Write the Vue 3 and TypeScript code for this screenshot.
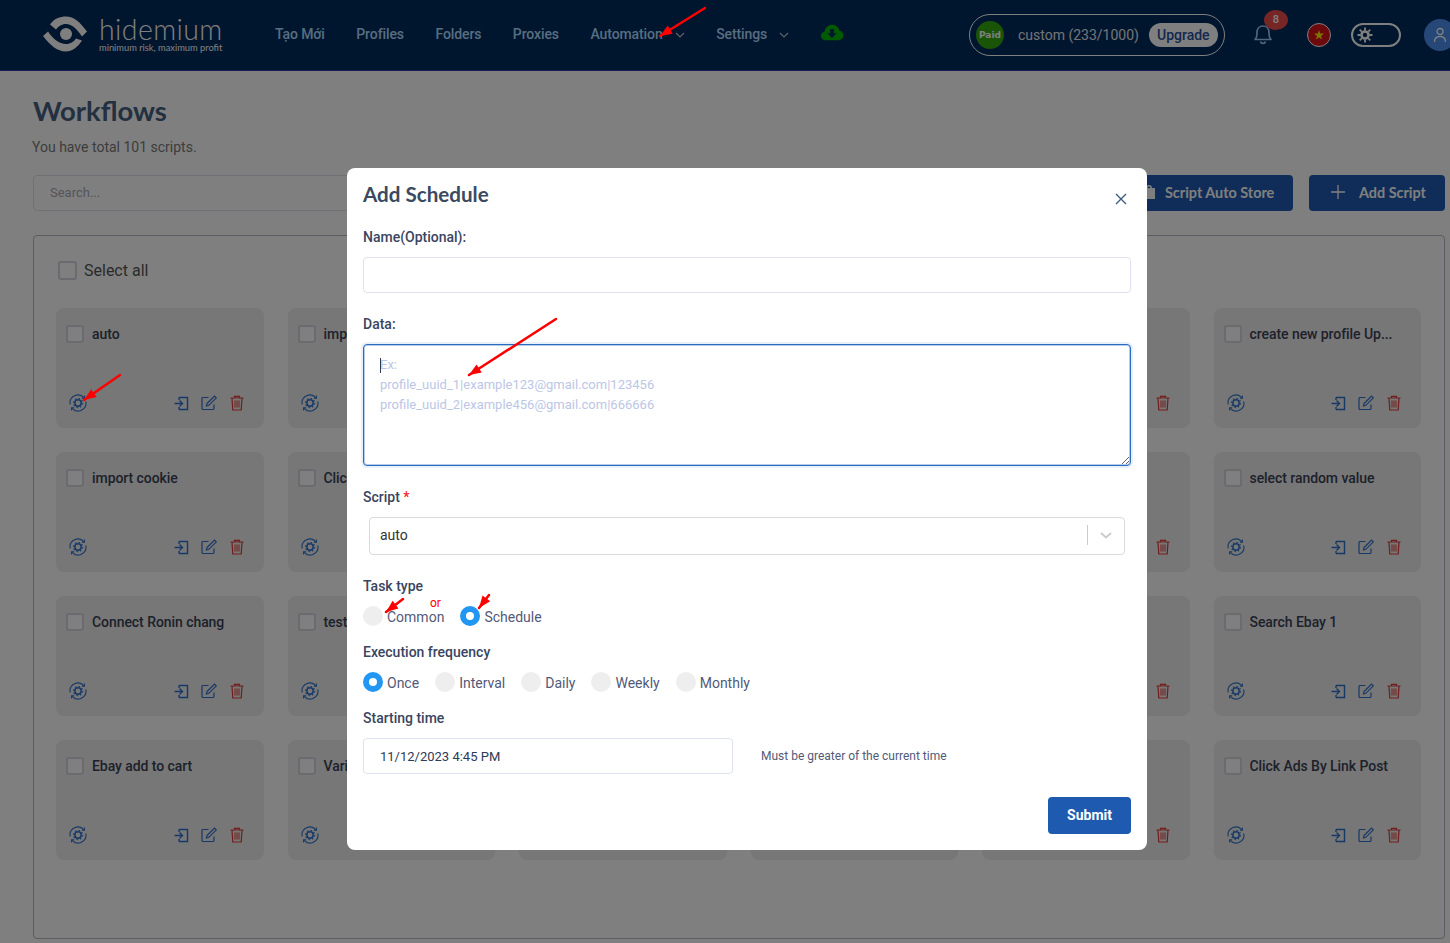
<script setup lang="ts">
const navItems = [
  { label: 'Tạo Mới', arrow: false },
  { label: 'Profiles', arrow: false },
  { label: 'Folders', arrow: false },
  { label: 'Proxies', arrow: false },
  { label: 'Automation', arrow: true },
  { label: 'Settings', arrow: true },
];

const scripts = [
  'auto', 'import cookie', '', '', '', 'create new profile Up...',
  'import cookie', 'Click Ads', '', '', '', 'select random value',
  'Connect Ronin chang', 'test', '', '', '', 'Search Ebay 1',
  'Ebay add to cart', 'Various', '', '', '', 'Click Ads By Link Post',
];

const frequencies = [
  { label: 'Once', on: true },
  { label: 'Interval', on: false },
  { label: 'Daily', on: false },
  { label: 'Weekly', on: false },
  { label: 'Monthly', on: false },
];

const taskTypes = [
  { label: 'Common', on: false },
  { label: 'Schedule', on: true },
];

const arrows = [
  { x1: 705, y1: 8, x2: 660, y2: 36 },
  { x1: 120, y1: 375, x2: 84, y2: 400 },
  { x1: 556, y1: 319, x2: 469, y2: 375 },
  { x1: 403, y1: 599, x2: 386, y2: 612 },
  { x1: 489, y1: 595, x2: 479, y2: 608 },
];

function arrowHead(a: { x1: number; y1: number; x2: number; y2: number }) {
  const ang = Math.atan2(a.y2 - a.y1, a.x2 - a.x1);
  const len = 13;
  const spread = 0.38;
  const p1 = [a.x2 - len * Math.cos(ang - spread), a.y2 - len * Math.sin(ang - spread)];
  const p2 = [a.x2 - len * Math.cos(ang + spread), a.y2 - len * Math.sin(ang + spread)];
  return `${a.x2},${a.y2} ${p1[0]},${p1[1]} ${p2[0]},${p2[1]}`;
}

const placeholder = 'Ex:\nprofile_uuid_1|example123@gmail.com|123456\nprofile_uuid_2|example456@gmail.com|666666';
</script>

<template>
  <div class="app">
    <header class="topbar">
      <div class="logo">
        <svg class="logo-mark" width="50" height="40" viewBox="0 0 50 40" fill="none">
          <path d="M9 10.5C13 4.5 19 2.5 25 2.5C33 2.5 39 8 46 17.5L41 22.5C36 15 31 10 25 10C20.5 10 17 12.5 15 15.5Z" fill="#fff" />
          <path d="M41 26.5C37 33 31 37.5 25 37.5C16 37.5 9 31 2 22L7 17.5C12 25 18 30 25 30C29.5 30 33 27.5 35 24.5Z" fill="#fff" />
          <circle cx="25" cy="20" r="6" fill="#fff" />
        </svg>
        <div class="logo-text">
          <span class="logo-name">hidemium</span>
          <span class="logo-sub">minimum risk, maximum profit</span>
        </div>
      </div>

      <nav class="nav">
        <a v-for="item in navItems" :key="item.label" class="nav-item">
          {{ item.label }}
          <svg v-if="item.arrow" width="10" height="6" viewBox="0 0 10 6" fill="none" stroke="#b8c2cc" stroke-width="1.2">
            <path d="M1 1l4 4 4-4" />
          </svg>
        </a>
        <svg class="cloud" width="24" height="17" viewBox="0 0 26 20" preserveAspectRatio="none">
          <path d="M7 19C3 19 1 16.5 1 14C1 11.5 2.5 9.5 5 9C5.5 4.5 9 1 13 1C17 1 20 3.5 21 8C24 8.5 25.5 11 25.5 13.5C25.5 16.5 23 19 20 19Z" fill="#00b400" />
          <path d="M11 6h4v5h3l-5 5.5-5-5.5h3z" fill="#002a5c" />
        </svg>
      </nav>

      <div class="plan">
        <span class="paid">Paid</span>
        <span class="plan-name">custom (233/1000)</span>
        <span class="upgrade">Upgrade</span>
      </div>

      <div class="bell">
        <svg width="20" height="22" viewBox="0 0 20 22" fill="none" stroke="#9ccaf5" stroke-width="1.7">
          <path d="M2 16.5C4 15 4 12.5 4 9.5C4 5.5 6.5 3 10 3C13.5 3 16 5.5 16 9.5C16 12.5 16 15 18 16.5Z" stroke-linejoin="round" />
          <path d="M7.5 18.5C8 21 12 21 12.5 18.5" />
        </svg>
        <span class="badge">8</span>
      </div>

      <span class="flag">
        <svg width="10" height="10" viewBox="0 0 10 10"><polygon points="5,0 6.2,3.5 10,3.6 7,5.9 8.1,9.6 5,7.4 1.9,9.6 3,5.9 0,3.6 3.8,3.5" fill="#ffe600" /></svg>
      </span>

      <span class="theme-toggle">
        <svg width="16" height="16" viewBox="0 0 16 16" fill="none" stroke="#fff">
          <circle cx="8" cy="8" r="3.5" stroke-width="2.6" />
          <path d="M8 0.5v3M8 12.5v3M0.5 8h3M12.5 8h3M2.7 2.7l2 2M11.3 11.3l2 2M2.7 13.3l2-2M11.3 4.7l2-2" stroke-width="1.8" />
        </svg>
      </span>

      <span class="avatar">
        <svg width="14" height="16" viewBox="0 0 14 16" fill="none" stroke="#fff" stroke-width="1.3">
          <circle cx="7" cy="4.5" r="3" />
          <path d="M1.5 15C1.5 11 4 9.5 7 9.5C10 9.5 12.5 11 12.5 15" />
        </svg>
      </span>
    </header>

    <main class="page">
      <h1 class="title">Workflows</h1>
      <p class="subtitle">You have total 101 scripts.</p>

      <div class="toolbar">
        <div class="search">Search...</div>
        <button class="btn btn-store">
          <svg width="14" height="16" viewBox="0 0 14 16" fill="#fff"><path d="M1 4h12v11H1zM4 4a3 3 0 0 1 6 0H8.5a1.5 1.5 0 0 0-3 0z" /></svg>
          Script Auto Store
        </button>
        <button class="btn btn-add">
          <svg width="16" height="16" viewBox="0 0 16 16" stroke="#fff" stroke-width="1.3"><path d="M8 1v14M1 8h14" /></svg>
          Add Script
        </button>
      </div>

      <section class="panel">
        <label class="select-all"><span class="check check-lg"></span>Select all</label>
        <div class="grid">
          <div v-for="(name, i) in scripts" :key="i" class="card">
            <div class="card-head">
              <span class="check"></span>
              <span class="card-name">{{ name }}</span>
            </div>
            <div class="card-actions">
              <svg width="18" height="18" viewBox="0 0 18 18" fill="none" stroke="#2f72cf" stroke-width="1.1">
                <path d="M1.2 10.5A7.9 7.9 0 0 1 15 3.9" />
                <path d="M16.8 7.5A7.9 7.9 0 0 1 3 14.1" />
                <path d="M15.4 1.6v2.6h-2.6M2.6 16.4v-2.6h2.6" />
                <circle cx="9" cy="9" r="3.2" stroke-width="1.5" />
                <circle cx="9" cy="9" r="4.6" stroke-width="1.1" stroke-dasharray="1.4 2.2" />
              </svg>
              <span class="spacer"></span>
              <svg width="15" height="15" viewBox="0 0 15 15" fill="none" stroke="#2f72cf" stroke-width="1.4">
                <path d="M5 1.5h8.5v12H5M5 1.5V4M5 13.5V11" />
                <path d="M0.5 7.5H8M5.5 4.5l3 3-3 3" />
              </svg>
              <svg width="16" height="16" viewBox="0 0 16 16" fill="none" stroke="#2f72cf" stroke-width="1.2">
                <path d="M13 9.5v4a1 1 0 0 1-1 1H2a1 1 0 0 1-1-1v-10a1 1 0 0 1 1-1h5.5" />
                <path d="M6 8.5L13.5 1l1.8 1.8L7.8 10.3 5.5 11z" />
              </svg>
              <svg class="ic-trash" width="14" height="16" viewBox="0 0 14 16" fill="none" stroke="#e23a3a" stroke-width="1.2">
                <path d="M0.5 3h13M4.5 3V1.3h5V3M2 3l.8 12h8.4L12 3" />
                <path d="M5 5.5v7M7 5.5v7M9 5.5v7" stroke-width="1" />
              </svg>
            </div>
          </div>
        </div>
      </section>
    </main>

    <div class="overlay">
      <div class="modal">
        <div class="modal-head">
          <h2 class="modal-title">Add Schedule</h2>
          <svg class="close" width="12" height="12" viewBox="0 0 12 12" stroke="#3d5a80" stroke-width="1.4"><path d="M1 1l10 10M11 1L1 11" /></svg>
        </div>

        <label class="label">Name(Optional):</label>
        <div class="input"></div>

        <label class="label label-data">Data:</label>
        <div class="textarea-wrap">
          <textarea class="textarea" :placeholder="placeholder"></textarea>
          <span class="caret"></span>
        </div>

        <label class="label label-script">Script <em>*</em></label>
        <div class="select">
          <span>auto</span>
          <span class="select-sep"></span>
          <svg width="12" height="7" viewBox="0 0 12 7" fill="none" stroke="#ccc" stroke-width="2"><path d="M1 1l5 4.5L11 1" /></svg>
        </div>

        <label class="label label-task">Task type</label>
        <div class="radios">
          <span v-for="r in taskTypes" :key="r.label" class="radio-item">
            <span class="radio" :class="{ on: r.on }"></span>{{ r.label }}
          </span>
        </div>

        <label class="label label-freq">Execution frequency</label>
        <div class="radios">
          <span v-for="r in frequencies" :key="r.label" class="radio-item">
            <span class="radio" :class="{ on: r.on }"></span>{{ r.label }}
          </span>
        </div>

        <label class="label label-time">Starting time</label>
        <div class="time-row">
          <div class="input input-time">11/12/2023 4:45 PM</div>
          <span class="hint">Must be greater of the current time</span>
        </div>

        <div class="modal-foot">
          <button class="submit">Submit</button>
        </div>
      </div>
    </div>

    <!-- red annotations drawn over the screenshot -->
    <span class="or">or</span>
    <svg class="marks" width="1450" height="943" viewBox="0 0 1450 943">
      <g v-for="(a, i) in arrows" :key="i">
        <line :x1="a.x1" :y1="a.y1" :x2="a.x2" :y2="a.y2" stroke="#f00" stroke-width="2.5" stroke-linecap="round" />
        <polygon :points="arrowHead(a)" fill="#f00" />
      </g>
    </svg>
  </div>
</template>

<style>
html,
body {
  margin: 0;
  background: #fff;
}
</style>

<style scoped>
.app {
  position: relative;
  width: 1450px;
  height: 943px;
  overflow: hidden;
  background: #fff;
  font-family: Roboto, "Liberation Sans", sans-serif;
  font-size: 14px;
  color: #2f3a56;
}

.topbar {
  display: flex;
  align-items: center;
  height: 70px;
  padding-left: 41px;
  background: #002a5c;
  border-bottom: 1px solid #3a3ab0;
  white-space: nowrap;
}

.logo {
  display: flex;
  flex: none;
  align-items: center;
  gap: 8px;
  width: 234px;
  margin-top: -3px;
}

.logo-text {
  display: flex;
  flex-direction: column;
  color: #fff;
}

.logo-name {
  font-family: Lato, sans-serif;
  font-size: 28.5px;
  font-weight: 300;
  line-height: 28px;
  letter-spacing: 0.4px;
}

.logo-sub {
  font-family: Lato, sans-serif;
  font-size: 9.3px;
  line-height: 9px;
}

.nav {
  display: flex;
  flex: none;
  align-items: center;
  gap: 31.5px;
  width: 694px;
  margin-top: -3px;
}

.nav-item {
  display: flex;
  align-items: center;
  gap: 12px;
  color: #aedcff;
  font-weight: 500;
  letter-spacing: -0.1px;
}

.nav-item svg {
  margin-top: 3px;
}

.cloud {
  margin-left: -1px;
  margin-top: -3px;
}

.plan {
  display: flex;
  align-items: center;
  flex: none;
  width: 256px;
  height: 42px;
  box-sizing: border-box;
  margin-top: -1px;
  border: 1px solid #fff;
  border-radius: 21px;
  padding: 0 6px;
  color: #fff;
}

.paid {
  display: flex;
  align-items: center;
  justify-content: center;
  width: 28px;
  height: 28px;
  border-radius: 50%;
  background: #34a80f;
  color: #fff;
  font-family: "DejaVu Sans", sans-serif;
  font-weight: 700;
  font-size: 9px;
}

.plan-name {
  margin-left: 14px;
  color: #e4e8f0;
}

.upgrade {
  margin-left: 10px;
  padding: 0 8px;
  height: 24px;
  line-height: 24px;
  border-radius: 12px;
  background: #fff;
  color: #2a4fa0;
  font-weight: 500;
}

.bell {
  position: relative;
  flex: none;
  margin-left: 28px;
  width: 20px;
  height: 22px;
  margin-top: -2px;
}

.badge {
  position: absolute;
  top: -13px;
  left: 1px;
  margin-left: 10px;
  width: 24px;
  height: 20px;
  border-radius: 50%;
  background: #ef4c4c;
  color: #fff;
  font-size: 11px;
  font-weight: 500;
  line-height: 20px;
  text-align: center;
}

.flag {
  display: flex;
  align-items: center;
  justify-content: center;
  flex: none;
  width: 24px;
  height: 24px;
  margin-left: 34px;
  margin-top: -1px;
  border-radius: 50%;
  background: #d8131b;
  border: 1px solid #fff;
  box-sizing: border-box;
}

.theme-toggle {
  display: flex;
  align-items: center;
  flex: none;
  width: 50px;
  height: 24px;
  margin-left: 20px;
  margin-top: -1px;
  padding-left: 4px;
  box-sizing: border-box;
  border: 2px solid #fff;
  border-radius: 12px;
}

.avatar {
  display: flex;
  align-items: center;
  justify-content: center;
  flex: none;
  width: 32px;
  height: 32px;
  margin-left: 23px;
  border-radius: 50%;
  background: #4a90f0;
}

.page {
  padding: 23px 5px 0 33px;
}

.title {
  margin: 0;
  font-family: Lato, sans-serif;
  font-size: 27.4px;
  font-weight: 700;
  line-height: 34px;
  color: #46607e;
}

.subtitle {
  margin: 9px 0 0 -1px;
  line-height: 20px;
  color: #7a7a7a;
}

.toolbar {
  display: flex;
  align-items: center;
  gap: 16px;
  margin-top: 18px;
}

.search {
  flex: 1;
  height: 36px;
  box-sizing: border-box;
  padding-left: 16px;
  border: 1px solid #e2e2ea;
  border-radius: 4px;
  background: #fff;
  color: #a9a9b5;
  font-size: 13px;
  line-height: 33px;
}

.btn {
  display: flex;
  align-items: center;
  height: 36px;
  border: 0;
  border-radius: 4px;
  background: #1e5bb0;
  color: #fff;
  font-family: Lato, sans-serif;
  font-size: 14.4px;
  font-weight: 700;
  white-space: nowrap;
}

.btn-store {
  gap: 9px;
  width: 160px;
  padding: 0 10px 2px 9px;
}

.btn-add {
  gap: 13px;
  width: 136px;
  padding: 0 10px 2px 21px;
}

.panel {
  box-sizing: border-box;
  height: 704px;
  margin-top: 24px;
  padding: 23px 23px 0 22px;
  border: 1px solid #b8b8c4;
  border-radius: 4px;
}

.select-all {
  display: flex;
  align-items: center;
  gap: 7px;
  height: 22px;
  font-size: 16px;
  color: #555;
}

.check {
  flex: none;
  width: 14px;
  height: 14px;
  border: 2px solid #d4d4de;
  border-radius: 3px;
  background: #fff;
}

.check-lg {
  margin-left: 2px;
  width: 15px;
  height: 15px;
}

.grid {
  display: grid;
  grid-template-columns: repeat(6, 1fr);
  gap: 24px;
  margin-top: 27px;
}

.card {
  display: flex;
  flex-direction: column;
  justify-content: space-between;
  height: 120px;
  box-sizing: border-box;
  padding: 16px 20px 16px 10px;
  border-radius: 8px;
  background: #eeeeee;
}

.card-head {
  display: flex;
  align-items: center;
  gap: 8px;
  height: 20px;
  font-weight: 500;
  color: #3b4256;
  letter-spacing: -0.06px;
  white-space: nowrap;
  overflow: hidden;
}

.card-actions {
  display: flex;
  align-items: center;
  gap: 12px;
  height: 18px;
  padding-left: 3px;
}

.ic-trash {
  margin-left: 1px;
}

.spacer {
  flex: 1;
}

.overlay {
  position: absolute;
  inset: 0;
  padding-top: 168px;
  background: rgba(0, 0, 0, 0.5);
}

.modal {
  box-sizing: border-box;
  width: 800px;
  height: 682px;
  margin-left: 347px;
  padding: 16px;
  border-radius: 8px;
  background: #fff;
}

.modal-head {
  display: flex;
  align-items: flex-start;
  justify-content: space-between;
  height: 44px;
}

.modal-title {
  margin: 0;
  font-family: Lato, sans-serif;
  font-size: 20.6px;
  font-weight: 700;
  line-height: 21px;
  color: #3a4a60;
}

.close {
  margin: 9px 4px 0 0;
}

.label {
  display: block;
  font-weight: 500;
  line-height: 18px;
  color: #3a4560;
}

.label em {
  color: #f5222d;
  font-style: normal;
}

.input {
  box-sizing: border-box;
  height: 36px;
  margin-top: 11px;
  border: 1px solid #dfe2ee;
  border-radius: 4px;
}

.label-data {
  margin-top: 22px;
}

.textarea-wrap {
  position: relative;
  margin-top: 11px;
}

.textarea {
  display: block;
  box-sizing: border-box;
  width: 768px;
  height: 122px;
  margin: 0;
  padding: 10px 16px;
  border: 1px solid #2a6cc0;
  border-radius: 4px;
  outline: none;
  box-shadow: 0 0 0 2px #e8f0fa, inset 0 0 0 1px rgba(42, 108, 192, 0.35);
  font-family: Roboto, sans-serif;
  font-size: 13px;
  line-height: 20px;
  color: #2f3a56;
}

.textarea::placeholder {
  color: #bcc6e6;
  opacity: 1;
}

.caret {
  position: absolute;
  left: 17px;
  top: 14px;
  width: 1px;
  height: 15px;
  background: #2f3a56;
}

.label-script {
  margin-top: 22px;
}

.select {
  display: flex;
  align-items: center;
  box-sizing: border-box;
  width: 756px;
  height: 38px;
  margin: 11px 0 0 6px;
  padding: 0 12px 2px 10px;
  border: 1px solid #d9d9d9;
  border-radius: 4px;
  color: #333;
}

.select > span:first-child {
  flex: 1;
}

.select-sep {
  width: 1px;
  height: 20px;
  margin-right: 12px;
  background: #ccc;
}

.label-task {
  margin-top: 22px;
}

.radios {
  display: flex;
  align-items: center;
  gap: 16px;
  height: 20px;
  margin-top: 12px;
  color: #525a78;
}

.radio-item {
  display: flex;
  align-items: center;
  gap: 4px;
  line-height: 20px;
}

.radio {
  box-sizing: border-box;
  width: 20px;
  height: 20px;
  margin-bottom: 2px;
  border-radius: 50%;
  background: #eee;
}

.radio.on {
  border: 6px solid #2196f3;
  background: #fff;
}

.label-freq {
  margin-top: 16px;
}

.label-time {
  margin-top: 16px;
}

.time-row {
  display: flex;
  align-items: center;
  gap: 28px;
  margin-top: 11px;
}

.input-time {
  width: 370px;
  margin-top: 0;
  padding-left: 16px;
  line-height: 36px;
  font-size: 13px;
  color: #2f3a56;
}

.hint {
  font-size: 12px;
  color: #525a78;
}

.modal-foot {
  display: flex;
  justify-content: flex-end;
  margin-top: 23px;
}

.submit {
  width: 83px;
  height: 37px;
  padding: 0 0 2px;
  border: 0;
  border-radius: 4px;
  background: #1e5bb0;
  color: #fff;
  font-family: Roboto, sans-serif;
  font-size: 14px;
  font-weight: 700;
}

.or {
  position: absolute;
  left: 430px;
  top: 596px;
  font-size: 12px;
  line-height: 14px;
  color: #f00;
}

.marks {
  position: absolute;
  left: 0;
  top: 0;
  pointer-events: none;
}
</style>
